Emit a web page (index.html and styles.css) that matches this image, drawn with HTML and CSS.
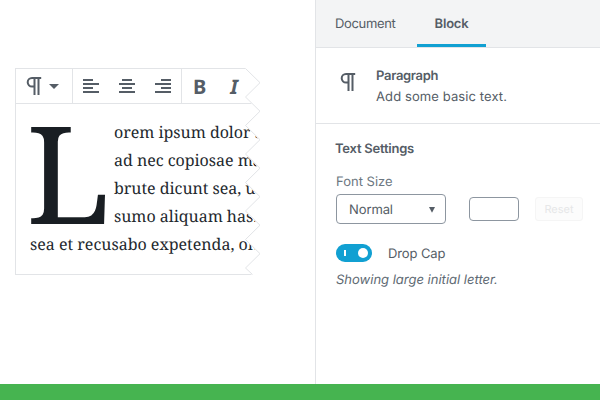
FILE: index.html
```html
<!DOCTYPE html>
<html lang="en">
<head>
<meta charset="utf-8">
<title>Block editor</title>
<link rel="stylesheet" href="styles.css">
</head>
<body>
<div class="app">
  <main class="canvas">
    <section class="block">
      <div class="toolbar">
        <div class="group group-type">
          <svg class="pilcrow" width="16" height="18" viewBox="0 0 16 18"><path d="M15.2 1H6a4.3 4.3 0 0 0 0 8.6h2.3M8.5 1v17M12.5 1v17"/></svg>
          <svg class="caret" width="10" height="5" viewBox="0 0 10 5"><path d="M0 0h10L5 5z"/></svg>
        </div>
        <div class="group group-align">
          <svg class="lines" width="16" height="14" viewBox="0 0 16 14"><path d="M0 1h10M0 5h16M0 9h10M0 13h16"/></svg>
          <svg class="lines" width="16" height="14" viewBox="0 0 16 14"><path d="M3 1h10M0 5h16M3 9h10M0 13h16"/></svg>
          <svg class="lines" width="16" height="14" viewBox="0 0 16 14"><path d="M6 1h10M0 5h16M6 9h10M0 13h16"/></svg>
        </div>
        <div class="group group-style">
          <span class="bold">B</span>
          <span class="italic">I</span>
        </div>
      </div>
      <div class="copy">
        <span class="dropcap">L</span>
        <div class="line indent">orem ipsum dolor s</div>
        <div class="line indent">ad nec copiosae ma</div>
        <div class="line indent">brute dicunt sea, u</div>
        <div class="line indent">sumo aliquam has.</div>
        <div class="line">sea et recusabo expetenda, on</div>
      </div>
    </section>
    <svg class="tear" width="17" height="208" viewBox="0 0 17 208"><path d="M1.500 .5 16 14.700 1.500 29 16 43.200 1.500 57.500 16 71.700 1.500 86 16 100.200 1.500 114.500 16 128.700 1.500 143 16 157.200 1.500 171.500 16 185.700 1.500 200l7 6.500"/></svg>
  </main>
  <aside class="sidebar">
    <nav class="tabs">
      <span class="tab tab-document">Document</span>
      <span class="tab tab-block">Block</span>
    </nav>
    <section class="card">
      <svg class="pilcrow" width="16" height="18" viewBox="0 0 16 18"><path d="M15.2 1H6a4.300 4.300 0 0 0 0 8.600h2.300M8.500 1v17M12.500 1v17"/></svg>
      <div class="card-text">
        <strong class="card-title">Paragraph</strong>
        <span class="card-desc">Add some basic text.</span>
      </div>
    </section>
    <section class="settings">
      <h2 class="heading">Text Settings</h2>
      <div class="label">Font Size</div>
      <div class="controls">
        <div class="select"><span class="select-value">Normal</span><svg width="6" height="6" viewBox="0 0 6 6"><path d="M0 0h6L3 5.800z"/></svg></div>
        <div class="number"></div>
        <div class="reset">Reset</div>
      </div>
      <div class="toggle-row">
        <span class="toggle"><span class="bar"></span><span class="knob"></span></span>
        <span class="toggle-label">Drop Cap</span>
      </div>
      <p class="help">Showing large initial letter.</p>
    </section>
  </aside>
</div>
<footer class="footer"></footer>
</body>
</html>
```
FILE: styles.css
```css
* { box-sizing: border-box; }
body {
  margin: 0;
  width: 600px;
  height: 400px;
  overflow: hidden;
  background: #fff;
  color: #555d66;
  font: 13px/20px Inter, sans-serif;
  text-rendering: geometricPrecision;
}
svg { display: block; flex: none; }
.app { display: flex; height: 384px; }
.footer { height: 16px; background: #46b450; }
.canvas { position: relative; width: 315px; padding: 68px 0 0 15px; }
.block {
  width: 245px;
  height: 207px;
  border: 1px solid #e2e4e7;
  border-right: 0;
  clip-path: polygon(0 0, 230px 0, 244px 14.700px, 230px 29px, 244px 43.200px, 230px 57.500px, 244px 71.700px, 230px 86px, 244px 100.200px, 230px 114.500px, 244px 128.700px, 230px 143px, 244px 157.200px, 230px 171.500px, 244px 185.700px, 230px 200px, 237px 207px, 0 207px);
}
.tear { position: absolute; left: 244px; top: 68px; fill: none; stroke: #e2e4e7; stroke-width: 1; }
.toolbar { display: flex; height: 35px; border-bottom: 1px solid #e2e4e7; }
.group { display: flex; align-items: center; }
.group + .group { border-left: 1px solid #e2e4e7; }
.group-type { width: 56px; padding-left: 10px; gap: 7px; }
.group-align { width: 109px; padding-left: 10px; gap: 20px; }
.group-style { padding: 1px 0 0 11px; gap: 24px; font: bold 20px/34px "Noto Sans", sans-serif; }
.pilcrow, .lines { fill: none; stroke: #555d66; stroke-width: 2; }
.italic { font-style: italic; }
.caret { fill: #555d66; }
.copy {
  position: relative;
  padding: 14px 0 0 14px;
  color: #23282d;
  font: 16px/28px "Noto Serif", "DejaVu Serif Condensed", "DejaVu Serif", serif;
  white-space: nowrap;
}
.indent { padding-left: 84px; letter-spacing: -.03px; }
.dropcap { position: absolute; left: 10px; top: 1px; color: #191e23; font-size: 136px; line-height: 134px; }
.sidebar { width: 285px; border-left: 1px solid #e2e4e7; }
.tabs { display: flex; height: 48px; background: #f3f4f5; border-bottom: 1px solid #e2e4e7; line-height: 49px; }
.tab-document { width: 101px; padding-left: 19px; letter-spacing: -.35px; }
.tab-block { width: 69px; height: 47px; border-bottom: 3px solid #11a0d2; text-align: center; font-weight: 600; letter-spacing: -.2px; }
.card { display: flex; height: 76px; padding: 18px 0 0 24px; gap: 20px; border-bottom: 1px solid #e2e4e7; }
.card .pilcrow { margin-top: 7px; }
.card-text { display: flex; flex-direction: column; line-height: 21px; }
.card-title { font-weight: 600; letter-spacing: -.3px; }
.card-desc { letter-spacing: .1px; }
.settings { padding: 15px 0 0 20px; }
.heading { margin: 0 0 13px -1px; font-size: 13px; line-height: 20px; font-weight: 600; letter-spacing: -.23px; }
.label { color: #6c7781; }
.controls { display: flex; align-items: center; margin-top: 2px; height: 30px; }
.select { display: flex; align-items: center; justify-content: space-between; width: 110px; height: 30px; padding: 1px 10px 0 12px; border: 1px solid #8d96a0; border-radius: 4px; }
.select-value { padding-top: 1px; letter-spacing: -.1px; }
.select svg { fill: #555d66; }
.number { width: 50px; height: 24px; margin-left: 23px; border: 1px solid #8d96a0; border-radius: 4px; }
.reset { width: 48px; height: 24px; margin-left: 16px; border: 1px solid #f5f5f5; border-radius: 3px; background: #fcfcfc; color: #e6e7e8; font-size: 11px; line-height: 23px; text-align: center; }
.toggle-row { display: flex; align-items: center; gap: 16px; height: 20px; margin-top: 19px; }
.toggle { display: flex; align-items: center; justify-content: space-between; width: 36px; height: 18px; padding: 0 4px 0 8px; border-radius: 9px; background: #11a0d2; }
.toggle-label { padding-top: 2px; letter-spacing: -.1px; }
.bar { width: 2px; height: 6px; background: #fff; }
.knob { width: 10px; height: 10px; border-radius: 50%; background: #fff; }
.help { margin: 7px 0 0; font-style: italic; color: #606a73; }
```
